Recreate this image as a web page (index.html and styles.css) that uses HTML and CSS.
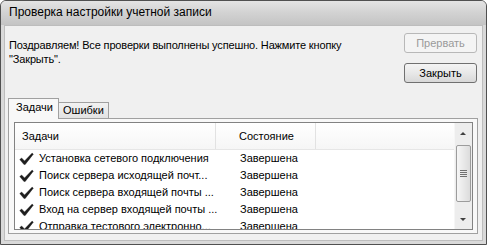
FILE: index.html
```html
<!DOCTYPE html>
<html lang="ru">
<head>
<meta charset="utf-8">
<title>Проверка настройки учетной записи</title>
<link rel="stylesheet" href="styles.css">
</head>
<body>
<div class="window">
  <div class="titlebar">Проверка настройки учетной записи</div>
  <div class="client">
    <div class="top">
      <div class="msg">Поздравляем! Все проверки выполнены успешно. Нажмите кнопку "Закрыть".</div>
      <div class="buttons">
        <div class="btn disabled">Прервать</div>
        <div class="btn">Закрыть</div>
      </div>
    </div>
    <div class="tabs">
      <div class="tab active">Задачи</div>
      <div class="tab">Ошибки</div>
    </div>
    <div class="panel">
      <div class="list">
        <div class="rows">
          <div class="header">
            <div class="hc c1">Задачи</div>
            <div class="hc c2">Состояние</div>
            <div class="hc c3"></div>
          </div>
          <div class="row"><div class="c1"><svg class="chk" viewBox="0 0 16 14"><path d="M0.8 7.6 L2.8 5.9 L5.9 9.1 L14 0.7 L15.3 1.8 L6.6 12.9 L5.3 12.9 Z"/></svg>Установка сетевого подключения</div><div class="c2">Завершена</div></div>
          <div class="row"><div class="c1"><svg class="chk" viewBox="0 0 16 14"><path d="M0.8 7.6 L2.8 5.9 L5.9 9.1 L14 0.7 L15.3 1.8 L6.6 12.9 L5.3 12.9 Z"/></svg>Поиск сервера исходящей почт...</div><div class="c2">Завершена</div></div>
          <div class="row"><div class="c1"><svg class="chk" viewBox="0 0 16 14"><path d="M0.8 7.6 L2.8 5.9 L5.9 9.1 L14 0.7 L15.3 1.8 L6.6 12.9 L5.3 12.9 Z"/></svg>Поиск сервера входящей почты ...</div><div class="c2">Завершена</div></div>
          <div class="row"><div class="c1"><svg class="chk" viewBox="0 0 16 14"><path d="M0.8 7.6 L2.8 5.9 L5.9 9.1 L14 0.7 L15.3 1.8 L6.6 12.9 L5.3 12.9 Z"/></svg>Вход на сервер входящей почты ...</div><div class="c2">Завершена</div></div>
          <div class="row"><div class="c1"><svg class="chk" viewBox="0 0 16 14"><path d="M0.8 7.6 L2.8 5.9 L5.9 9.1 L14 0.7 L15.3 1.8 L6.6 12.9 L5.3 12.9 Z"/></svg>Отправка тестового электронно...</div><div class="c2">Завершена</div></div>
        </div>
        <div class="scrollbar">
          <div class="arrow up"></div>
          <div class="track"><div class="thumb"><div class="grip"></div></div></div>
          <div class="arrow down"></div>
        </div>
      </div>
    </div>
  </div>
</div>
</body>
</html>
```

FILE: styles.css
```css
html, body {
  margin: 0;
  padding: 0;
  background: #ffffff;
}
body {
  font-family: "Liberation Sans", Arial, sans-serif;
  font-size: 11px;
  color: #000;
}
.window {
  width: 487px;
  height: 245px;
  box-sizing: border-box;
  border: 1px solid #505050;
  border-radius: 6px 6px 0 0;
  background: #d9d9d9;
  display: flex;
  flex-direction: column;
  overflow: hidden;
}
.titlebar {
  height: 24px;
  line-height: 23px;
  padding-left: 8px;
  font-size: 12px;
  color: #000;
  background: linear-gradient(to bottom, #e4e4e4 0%, #d2d2d2 50%, #c4c4c4 100%);
  flex: none;
}
.client {
  flex: 1;
  margin: 0 3px 3px 3px;
  background: #f0f0f0;
  border: 1px solid #bdbdbd;
  display: flex;
  flex-direction: column;
  padding: 7px 3px 3px 3px;
}
.top {
  display: flex;
  height: 65px;
  flex: none;
}
.msg {
  flex: 1;
  padding: 5px 0 0 1px;
  line-height: 14px;
  letter-spacing: -0.15px;
  max-width: 360px;
}
.buttons {
  display: flex;
  flex-direction: column;
  gap: 10px;
  width: 73px;
  flex: none;
  margin-right: 2px;
  margin-left: auto;
}
.btn {
  height: 20px;
  box-sizing: border-box;
  border: 1px solid #707070;
  border-radius: 3px;
  background: linear-gradient(to bottom, #f4f4f4 0%, #e8e8e8 50%, #d8d8d8 100%);
  text-align: center;
  line-height: 18px;
}
.btn.disabled {
  border-color: #b8b8b8;
  background: #f4f4f4;
  color: #9a9a9a;
}
.tabs {
  display: flex;
  align-items: flex-end;
  height: 20px;
  flex: none;
  position: relative;
  z-index: 1;
}
.tab {
  box-sizing: border-box;
  height: 16px;
  line-height: 14px;
  padding: 0 4px;
  border: 1px solid #a0a0a0;
  border-left: none;
  border-bottom: none;
  background: linear-gradient(to bottom, #f2f2f2, #e2e2e2);
  width: 50px;
}
.tab.active {
  height: 21px;
  margin-bottom: -1px;
  background: #f8f8f8;
  border-left: 1px solid #a0a0a0;
  width: 51px;
  padding-left: 7px;
  line-height: 16px;
}
.panel {
  width: 470px;
  height: 116px;
  flex: none;
  box-sizing: border-box;
  border: 1px solid #a0a0a0;
  background: #f8f8f8;
  padding: 3px 4px 3px 5px;
}
.list {
  height: 108px;
  box-sizing: border-box;
  border: 1px solid #828282;
  background: #fff;
  display: flex;
  overflow: hidden;
}
.rows {
  flex: 1;
  overflow: hidden;
}
.header {
  display: flex;
  height: 26px;
  border-bottom: 1px solid #e6e6e6;
  background: linear-gradient(to bottom, #ffffff, #f6f6f6);
}
.hc {
  box-sizing: border-box;
  border-right: 1px solid #e2e2e2;
  line-height: 26px;
  padding-left: 7px;
}
.hc.c3 {
  flex: 1;
  border-right: none;
}
.c1 {
  width: 201px;
  flex: none;
}
.c2 {
  width: 100px;
  flex: none;
  box-sizing: border-box;
}
.header .c2 {
  padding-left: 23px;
}
.row {
  display: flex;
  height: 17px;
  line-height: 17px;
}
.row .c1 {
  display: flex;
  align-items: center;
  padding-left: 4px;
  box-sizing: border-box;
  white-space: nowrap;
}
.row .c2 {
  padding-left: 24px;
  white-space: nowrap;
}
.chk {
  width: 15px;
  height: 14px;
  margin-right: 5px;
  flex: none;
}
.chk path {
  fill: #1e1e1e;
  stroke: #1e1e1e;
  stroke-width: 0.4;
  stroke-linejoin: round;
}
.scrollbar {
  width: 17px;
  flex: none;
  display: flex;
  flex-direction: column;
  background: #ededed;
  border-left: 1px solid #f6f6f6;
}
.arrow {
  height: 17px;
  flex: none;
  position: relative;
}
.arrow::after {
  content: "";
  position: absolute;
  left: 5px;
  width: 0;
  height: 0;
  border-left: 3px solid transparent;
  border-right: 3px solid transparent;
}
.arrow.up::after {
  top: 9px;
  border-bottom: 3px solid #404040;
}
.arrow.down::after {
  top: 6px;
  border-top: 3px solid #404040;
}
.track {
  flex: 1;
  padding: 5px 1px 10px 1px;
  display: flex;
}
.thumb {
  flex: 1;
  box-sizing: border-box;
  border: 1px solid #9c9c9c;
  border-radius: 2px;
  background: linear-gradient(to right, #f6f6f6, #dcdcdc);
  display: flex;
  align-items: center;
  justify-content: center;
}
.grip {
  width: 7px;
  height: 7px;
  background: repeating-linear-gradient(to bottom, #707070 0, #707070 1px, transparent 1px, transparent 2px);
}
```
